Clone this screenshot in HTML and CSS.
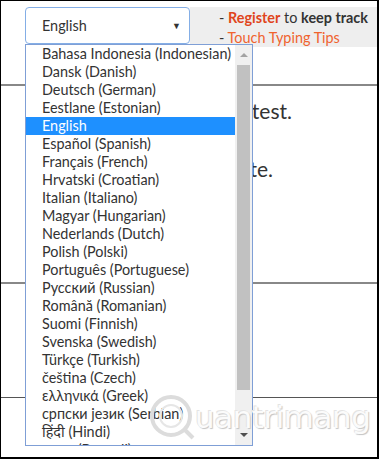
FILE: index.html
```html
<!DOCTYPE html>
<html>
	<head>
		<meta charset="utf-8">
		<title>Typing Test</title>
		<link rel="stylesheet" href="styles.css">
	</head>
	<body>
		<section class="frame">
			<header class="top">
				<div class="pick">
					<div class="select">
						<span>English</span>
						<i class="caret">&#9660;</i>
					</div>
				</div>
				<div class="links">
					<p>- <b class="reg">Register</b> to <b>keep track</b></p>
					<p>- <a href="javascript:;">Touch Typing Tips</a></p>
				</div>
			</header>
			<div class="body">
				<div class="box">
					<p class="line">Take a typing test.</p>
					<p class="line two">Press Enter to complete.</p>
				</div>
				<div class="box mid"></div>
				<div class="box low"></div>
				<div class="stem"></div>
			</div>

			<ul class="list">
				<li>Bahasa Indonesia (Indonesian)</li>
				<li>Dansk (Danish)</li>
				<li>Deutsch (German)</li>
				<li>Eestlane (Estonian)</li>
				<li class="active">English</li>
				<li>Español (Spanish)</li>
				<li>Français (French)</li>
				<li>Hrvatski (Croatian)</li>
				<li>Italian (Italiano)</li>
				<li>Magyar (Hungarian)</li>
				<li>Nederlands (Dutch)</li>
				<li>Polish (Polski)</li>
				<li>Português (Portuguese)</li>
				<li>Русский (Russian)</li>
				<li>Română (Romanian)</li>
				<li>Suomi (Finnish)</li>
				<li>Svenska (Swedish)</li>
				<li>Türkçe (Turkish)</li>
				<li>čeština (Czech)</li>
				<li>ελληνικά (Greek)</li>
				<li>српски језик (Serbian)</li>
				<li>हिंदी (Hindi)</li>
				<li>বাংলা (Bengali)</li>
			</ul>
			<div class="bar">
				<span class="up"></span>
				<span class="thumb"></span>
				<span class="down"></span>
			</div>

			<div class="mark">
				<svg width="46" height="46" viewBox="0 0 46 46">
					<circle cx="22" cy="22" r="19" fill="none" stroke="#dcdcdc" stroke-width="4"/>
					<circle cx="22" cy="22" r="11" fill="none" stroke="#e6e6e6" stroke-width="2"/>
					<path d="M35 35 L44 44" stroke="#dcdcdc" stroke-width="4"/>
				</svg>
				<span>uantrimang</span>
			</div>
		</section>
	</body>
</html>
```

FILE: styles.css
```css
body {
	margin: 0;
	background: #fff;
}

.frame {
	width: 379px;
	height: 459px;
	box-sizing: border-box;
	border-top: 1px solid #000;
	border-left: 1px solid #000;
	border-right: 2px solid #000;
	border-bottom: 2px solid #000;
	position: relative;
	overflow: hidden;
	font-family: Lato, "Noto Sans", sans-serif;
	color: #333;
}

.top {
	display: flex;
	margin-top: 6px;
	height: 40px;
}

.pick {
	width: 189px;
	padding-left: 24px;
	box-sizing: border-box;
}

.select {
	height: 37px;
	box-sizing: border-box;
	border: 1px solid #84aee6;
	border-radius: 4px;
	display: flex;
	align-items: center;
	justify-content: space-between;
	padding: 0 8px 0 16px;
	font-size: 14.4px;
}

.caret {
	font-style: normal;
	font-size: 9px;
	color: #333;
}

.links {
	flex: 1;
	background: #eee;
	padding: 1px 0 0 29px;
	font-size: 14.4px;
	white-space: nowrap;
}

.links p {
	margin: 0;
	line-height: 20px;
}

.links b {
	color: #333;
}

.links b.reg {
	color: #e0451c;
}

.links a {
	color: #f0632e;
	text-decoration: none;
}

.body {
	padding-top: 37px;
}

.box {
	border-top: 2px solid #888;
	height: 196px;
}

.line {
	margin: 13px 0 0;
	width: 291px;
	text-align: right;
	font-size: 21px;
	line-height: 24px;
	height: 45px;
	white-space: nowrap;
}

.line.two {
	width: 272px;
}

.box.mid {
	height: 113px;
}

.box.low {
	border-top: 1px solid #555;
	height: 48px;
}

.stem {
	width: 1px;
	height: 12px;
	margin-left: 65px;
	margin-top: -12px;
	background: #333;
}

.list {
	position: absolute;
	left: 24px;
	top: 43px;
	width: 210px;
	height: 400px;
	margin: 0;
	padding: 0;
	list-style: none;
	background: #fff;
	border: 1px solid #7f9fd6;
	border-right: none;
	overflow: hidden;
	font-size: 14.4px;
}

.list li {
	height: 18px;
	line-height: 18px;
	padding-left: 16px;
	white-space: nowrap;
}

.list li.active {
	background: #1e90ff;
	color: #fff;
}

.bar {
	position: absolute;
	left: 234px;
	top: 43px;
	width: 17px;
	height: 400px;
	background: #f0f0f0;
	border: 1px solid #7f9fd6;
	border-left: none;
	display: flex;
	flex-direction: column;
	align-items: center;
}

.up,
.down {
	width: 0;
	height: 0;
	border-left: 4px solid transparent;
	border-right: 4px solid transparent;
	margin: 8px 0;
}

.up {
	border-bottom: 4px solid #a3a3a3;
}

.thumb {
	width: 13px;
	height: 325px;
	background: #c1c1c1;
}

.down {
	border-top: 4px solid #505050;
	margin-top: auto;
}

.mark {
	position: absolute;
	left: 148px;
	top: 393px;
	display: flex;
	align-items: center;
	pointer-events: none;
}

.mark span {
	font-family: "DejaVu Sans", sans-serif;
	font-size: 31px;
	letter-spacing: -0.5px;
	color: #fbfbfb;
	text-shadow: 1px 1px 1px #c4c4c4, -1px -1px 0 #e4e4e4;
}
```
